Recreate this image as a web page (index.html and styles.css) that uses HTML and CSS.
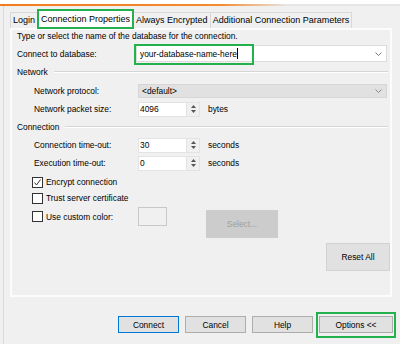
FILE: index.html
```html
<!DOCTYPE html>
<html lang="en">
<head>
  <meta charset="UTF-8" />
  <title>Connect to Server - Options</title>
  <link rel="stylesheet" href="styles.css">
</head>
<body>

  <div class="titlebar"></div>
  <div class="accent"></div>

  <div class="dialog">
    <!-- Tabs -->
    <div class="tabs">
      <div class="tab">Login</div>
      <div class="tab active">Connection Properties</div>
      <div class="tab">Always Encrypted</div>
      <div class="tab">Additional Connection Parameters</div>
    </div>

    <!-- Connection Properties page -->
    <div class="panel">
      <p class="hint">Type or select the name of the database for the connection.</p>

      <div class="field db-row">
        <label class="lbl-wide">Connect to database:</label>
        <div class="combo">
          <span class="typed">your-database-name-here</span><span class="caret"></span>
          <svg class="chevron" width="7" height="4" viewBox="0 0 7 4"><polyline points="0.5,0.5 3.5,3.5 6.5,0.5" fill="none" stroke="#777" stroke-width="1"/></svg>
          <div class="mark"></div>
        </div>
      </div>

      <div class="group"><span>Network</span><div class="rule"></div></div>

      <div class="field sub protocol-row">
        <label class="lbl">Network protocol:</label>
        <div class="select">
          <span>&lt;default&gt;</span>
          <svg class="chevron" width="7" height="4" viewBox="0 0 7 4"><polyline points="0.5,0.5 3.5,3.5 6.5,0.5" fill="none" stroke="#888" stroke-width="1"/></svg>
        </div>
      </div>

      <div class="field sub spin-row first">
        <label class="lbl">Network packet size:</label>
        <div class="spin">
          <span class="value">4096</span>
          <span class="arrows">
            <svg width="5" height="3" viewBox="0 0 5 3"><polygon points="0,3 2.5,0 5,3" fill="#555"/></svg>
            <svg width="5" height="3" viewBox="0 0 5 3"><polygon points="0,0 2.5,3 5,0" fill="#555"/></svg>
          </span>
        </div>
        <span class="unit">bytes</span>
      </div>

      <div class="group"><span>Connection</span><div class="rule"></div></div>

      <div class="field sub spin-row">
        <label class="lbl">Connection time-out:</label>
        <div class="spin">
          <span class="value">30</span>
          <span class="arrows">
            <svg width="5" height="3" viewBox="0 0 5 3"><polygon points="0,3 2.5,0 5,3" fill="#555"/></svg>
            <svg width="5" height="3" viewBox="0 0 5 3"><polygon points="0,0 2.5,3 5,0" fill="#555"/></svg>
          </span>
        </div>
        <span class="unit">seconds</span>
      </div>

      <div class="field sub spin-row tight">
        <label class="lbl">Execution time-out:</label>
        <div class="spin">
          <span class="value">0</span>
          <span class="arrows">
            <svg width="5" height="3" viewBox="0 0 5 3"><polygon points="0,3 2.5,0 5,3" fill="#555"/></svg>
            <svg width="5" height="3" viewBox="0 0 5 3"><polygon points="0,0 2.5,3 5,0" fill="#555"/></svg>
          </span>
        </div>
        <span class="unit">seconds</span>
      </div>

      <div class="field check-row encrypt">
        <span class="box">
          <svg width="9" height="9" viewBox="0 0 9 9"><polyline points="1.5,4.5 3.5,7 7.5,1.5" fill="none" stroke="#333" stroke-width="1"/></svg>
        </span>
        <span>Encrypt connection</span>
      </div>

      <div class="field check-row trust">
        <span class="box"></span>
        <span>Trust server certificate</span>
      </div>

      <div class="custom-row">
        <div class="check-row color-check">
          <span class="box"></span>
          <span>Use custom color:</span>
        </div>
        <div class="swatch"></div>
        <button class="btn select-btn" disabled>Select...</button>
      </div>

      <button class="btn reset-btn">Reset All</button>
    </div>

    <!-- Dialog buttons -->
    <div class="footer">
      <button class="btn default">Connect</button>
      <button class="btn">Cancel</button>
      <button class="btn">Help</button>
      <button class="btn options">Options &lt;&lt;</button>
    </div>
  </div>

</body>
</html>
```

FILE: styles.css
```css
/* General */
* {
  box-sizing: border-box;
}

body {
  margin: 0;
  width: 400px;
  height: 344px;
  overflow: hidden;
  background-color: #f0f0f0;
  font-family: "Liberation Sans", Arial, sans-serif;
  font-size: 8.4px;
  color: #000;
}

.titlebar {
  height: 4px;
  background: #fff;
}

.accent {
  height: 2px;
  background: linear-gradient(to right, #f47b20 0%, #f58a2e 55%, #e6e6e6 72%, #e6e6e6 100%);
}

.dialog {
  margin-left: 3px;
  height: 338px;
  border-left: 1px solid #dadada;
  padding: 3px 0 0 6px;
}

/* Tabs */
.tabs {
  display: flex;
  align-items: flex-end;
  height: 19px;
  font-size: 9px;
}

.tab {
  height: 16px;
  line-height: 14px;
  padding: 0 2px;
  border: 1px solid #d9d9d9;
  border-bottom: none;
  margin-right: -1px;
  background: #f0f0f0;
  white-space: nowrap;
}

.tab.active {
  position: relative;
  z-index: 1;
  height: 20px;
  line-height: 16px;
  margin-bottom: -1px;
  padding: 0 2px;
  background: #fff;
  border: 2px solid #22b14c;
}

/* Panel */
.panel {
  display: flex;
  flex-direction: column;
  width: 382px;
  height: 269px;
  border: 2px solid #fcfcfc;
  padding-left: 5px;
}

.hint {
  margin: 0;
  height: 12px;
  line-height: 12px;
}

.field {
  display: flex;
  align-items: center;
}

.lbl-wide {
  width: 119px;
}

.lbl {
  width: 104px;
}

.sub {
  padding-left: 17px;
}

.db-row {
  margin-top: 3px;
  height: 17px;
}

.combo {
  position: relative;
  flex: 1;
  height: 17px;
  margin-right: 3px;
  display: flex;
  align-items: center;
  padding-left: 3px;
  background: #fff;
  border: 1px solid #dcdcdc;
}

.caret {
  width: 1px;
  height: 11px;
  background: #000;
}

.chevron {
  margin-left: auto;
  margin-right: 4px;
}

.mark {
  position: absolute;
  left: -3px;
  top: -2px;
  width: 120px;
  height: 21px;
  border: 2px solid #22b14c;
}

/* Group titles */
.group {
  display: flex;
  align-items: center;
  height: 12px;
  margin-top: 4px;
}

.rule {
  flex: 1;
  height: 2px;
  margin: 0 2px 0 6px;
  border-top: 1px solid #d5d5d5;
  border-bottom: 1px solid #fff;
}

.protocol-row {
  margin-top: 6px;
  height: 14px;
}

.select {
  flex: 1;
  height: 14px;
  margin-right: 3px;
  display: flex;
  align-items: center;
  padding-left: 3px;
  background: #e1e1e1;
  border: 1px solid #d6d6d6;
}

/* Spin boxes */
.spin-row {
  height: 16px;
  margin-top: 4px;
}

.spin-row.first {
  margin-top: 3px;
}

.spin-row.tight {
  margin-top: 2px;
}

.spin {
  display: flex;
  width: 62px;
  height: 15px;
  border: 1px solid #e3e3e3;
  background: #fff;
}

.spin .value {
  flex: 1;
  line-height: 13px;
  padding-left: 1px;
}

.spin .arrows {
  width: 13px;
  display: flex;
  flex-direction: column;
  align-items: center;
  justify-content: center;
  gap: 2px;
  background: #f0f0f0;
  border-left: 1px solid #e3e3e3;
}

.unit {
  margin-left: 8px;
}

/* Checkboxes */
.check-row {
  display: flex;
  align-items: center;
  padding-left: 15px;
}

.check-row.encrypt {
  margin-top: 5px;
  height: 12px;
}

.check-row.trust {
  margin-top: 4px;
  height: 12px;
}

.box {
  width: 11px;
  height: 11px;
  margin-right: 3px;
  border: 1px solid #333;
  background: #fff;
  display: flex;
  align-items: center;
  justify-content: center;
}

.custom-row {
  display: flex;
  align-items: flex-start;
  margin-top: 3px;
}

.color-check {
  width: 121px;
  height: 19px;
}

.swatch {
  width: 29px;
  height: 19px;
  border: 1px solid #c8c8c8;
  background: #f0f0f0;
}

/* Buttons */
.btn {
  font-family: inherit;
  font-size: 8.4px;
  color: #000;
  background: #e1e1e1;
  border: 1px solid #adadad;
  padding: 0;
  margin: 0;
}

.select-btn {
  width: 72px;
  height: 28px;
  margin: 3px 0 0 39px;
  background: #cccccc;
  border-color: #cccccc;
  color: #a0a0a0;
}

.reset-btn {
  align-self: flex-end;
  width: 64px;
  height: 28px;
  margin-top: 5px;
  border-color: #d2d2d2;
}

.footer {
  display: flex;
  justify-content: flex-end;
  gap: 6px;
  width: 383px;
  margin-top: 19px;
}

.footer .btn {
  width: 61px;
  height: 17px;
}

.footer .btn.default {
  border-color: #0078d7;
}

.footer .btn.options {
  position: relative;
  width: 74px;
}

.footer .btn.options::after {
  content: "";
  position: absolute;
  left: -4px;
  right: -4px;
  top: -5px;
  bottom: -6px;
  border: 2px solid #22b14c;
}
```
